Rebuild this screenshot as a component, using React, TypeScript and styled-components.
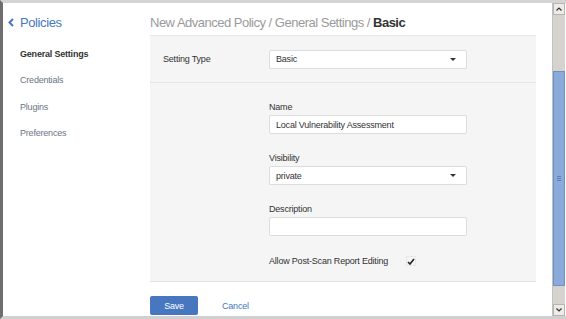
import React from "react";
import styled, { createGlobalStyle } from "styled-components";

const GlobalStyle = createGlobalStyle`
  html, body { margin: 0; padding: 0; }
  body {
    font-family: "Liberation Sans", Arial, sans-serif;
    background: #ffffff;
    color: #333333;
  }
`;

const Frame = styled.div`
  width: 566px;
  height: 319px;
  box-sizing: border-box;
  border-top: 3px solid #d4d4d4;
  border-left: 3px solid #6e6e6e;
  border-bottom: 3px solid #d0d0d0;
  display: flex;
  overflow: hidden;
`;

const Sidebar = styled.nav`
  width: 147px;
  flex: none;
  padding: 12px 0 0 5px;
  box-sizing: border-box;
`;

const BackLink = styled.a`
  display: flex;
  align-items: center;
  gap: 6px;
  color: #4677bf;
  font-size: 13px;
  letter-spacing: -0.4px;
  text-decoration: none;
  margin-bottom: 19px;
`;

const NavItem = styled.div<{ $active?: boolean }>`
  padding-left: 12px;
  font-size: 9px;
  letter-spacing: -0.2px;
  height: 26.4px;
  color: ${(p) => (p.$active ? "#333333" : "#6a7585")};
  font-weight: ${(p) => (p.$active ? "bold" : "normal")};
`;

const Main = styled.main`
  flex: 1;
  padding: 12px 16px 0 0;
  box-sizing: border-box;
`;

const Title = styled.h1`
  margin: 0;
  font-size: 13px;
  letter-spacing: -0.5px;
  line-height: 15px;
  font-weight: normal;
  color: #9a9a9a;
  padding-bottom: 5px;
  border-bottom: 1px solid #e6e6e6;
  strong {
    color: #333333;
    font-weight: bold;
  }
`;

const Panel = styled.section`
  background: #f5f5f5;
  border-bottom: 1px solid #e3e3e3;
`;

const TypeRow = styled.div`
  display: flex;
  align-items: center;
  height: 46px;
  padding-left: 13px;
  border-bottom: 1px solid #e6e6e6;
`;

const RowLabel = styled.span`
  width: 106px;
  font-size: 9px;
  letter-spacing: -0.2px;
  color: #333333;
`;

const Fields = styled.div`
  padding: 18px 0 13px 119px;
  display: flex;
  flex-direction: column;
`;

const Field = styled.div`
  display: flex;
  flex-direction: column;
  margin-bottom: 18px;
`;

const Label = styled.label`
  font-size: 9px;
  letter-spacing: -0.2px;
  line-height: 13px;
  color: #333333;
  margin-bottom: 1px;
`;

const Box = styled.div`
  width: 198px;
  height: 19px;
  box-sizing: border-box;
  background: #ffffff;
  border: 1px solid #dcdcdc;
  border-radius: 2px;
  display: flex;
  align-items: center;
  justify-content: space-between;
  padding: 0 10px 0 6px;
  font-size: 9px;
  letter-spacing: -0.2px;
  color: #333333;
`;

const Caret = styled.span`
  width: 0;
  height: 0;
  border-left: 3px solid transparent;
  border-right: 3px solid transparent;
  border-top: 3px solid #333333;
`;

const CheckRow = styled.div`
  display: flex;
  align-items: center;
  gap: 18px;
  font-size: 9px;
  letter-spacing: -0.2px;
  color: #333333;
  height: 14px;
`;

const CheckBox = styled.span`
  width: 8px;
  height: 8px;
  border: 1px solid #e8e8e8;
  display: flex;
  align-items: center;
  justify-content: center;
`;

const Actions = styled.div`
  display: flex;
  align-items: center;
  gap: 24px;
  margin-top: 14px;
`;

const SaveButton = styled.button`
  width: 48px;
  height: 19px;
  border: none;
  border-radius: 2px;
  background: #4677bf;
  color: #ffffff;
  font-family: inherit;
  font-size: 9px;
  letter-spacing: -0.2px;
  padding: 0;
`;

const CancelLink = styled.a`
  color: #4677bf;
  font-size: 9px;
  letter-spacing: -0.2px;
  text-decoration: none;
`;

const ScrollBar = styled.div`
  width: 12px;
  flex: none;
  margin-right: 1px;
  background: #d6d3ce;
  border-left: 1px solid #c4c1bb;
  display: flex;
  flex-direction: column;
`;

const ArrowButton = styled.div`
  height: 10px;
  background: #eeece8;
  border: 1px solid #b8b5b0;
  display: flex;
  align-items: center;
  justify-content: center;
`;

const Trough = styled.div<{ $size: number }>`
  height: ${(p) => p.$size}px;
`;

const Thumb = styled.div`
  flex: 1;
  background: #8aaadb;
  border: 1px solid #6f90c4;
  display: flex;
  align-items: center;
  justify-content: center;
`;

const Grip = styled.div`
  width: 4px;
  height: 5px;
  background: repeating-linear-gradient(#5d7fb5 0 1px, transparent 1px 2px);
`;

const Select = ({ value }: { value: string }) => (
  <Box>
    <span>{value}</span>
    <Caret />
  </Box>
);

export default function App() {
  return (
    <>
      <GlobalStyle />
      <Frame>
        <Sidebar>
          <BackLink href="#">
            <svg width="6" height="9" viewBox="0 0 6 9">
              <path d="M5 1 L1.5 4.5 L5 8" fill="none" stroke="#4677bf" strokeWidth="2" />
            </svg>
            Policies
          </BackLink>
          <NavItem $active>General Settings</NavItem>
          <NavItem>Credentials</NavItem>
          <NavItem>Plugins</NavItem>
          <NavItem>Preferences</NavItem>
        </Sidebar>
        <Main>
          <Title>
            New Advanced Policy / General Settings / <strong>Basic</strong>
          </Title>
          <Panel>
            <TypeRow>
              <RowLabel>Setting Type</RowLabel>
              <Select value="Basic" />
            </TypeRow>
            <Fields>
              <Field>
                <Label>Name</Label>
                <Box>Local Vulnerability Assessment</Box>
              </Field>
              <Field>
                <Label>Visibility</Label>
                <Select value="private" />
              </Field>
              <Field>
                <Label>Description</Label>
                <Box />
              </Field>
              <CheckRow>
                Allow Post-Scan Report Editing
                <CheckBox>
                  <svg width="8" height="7" viewBox="0 0 8 7">
                    <path d="M1 4 L3 6 L7 1" fill="none" stroke="#222" strokeWidth="1.6" />
                  </svg>
                </CheckBox>
              </CheckRow>
            </Fields>
          </Panel>
          <Actions>
            <SaveButton>Save</SaveButton>
            <CancelLink href="#">Cancel</CancelLink>
          </Actions>
        </Main>
        <ScrollBar>
          <ArrowButton>
            <svg width="6" height="4" viewBox="0 0 6 4">
              <path d="M0.5 3.5 L3 1 L5.5 3.5" fill="none" stroke="#333" strokeWidth="1.2" />
            </svg>
          </ArrowButton>
          <Trough $size={56} />
          <Thumb>
            <Grip />
          </Thumb>
          <Trough $size={18} />
          <ArrowButton>
            <svg width="6" height="4" viewBox="0 0 6 4">
              <path d="M0.5 0.5 L3 3 L5.5 0.5" fill="none" stroke="#333" strokeWidth="1.2" />
            </svg>
          </ArrowButton>
        </ScrollBar>
      </Frame>
    </>
  );
}
